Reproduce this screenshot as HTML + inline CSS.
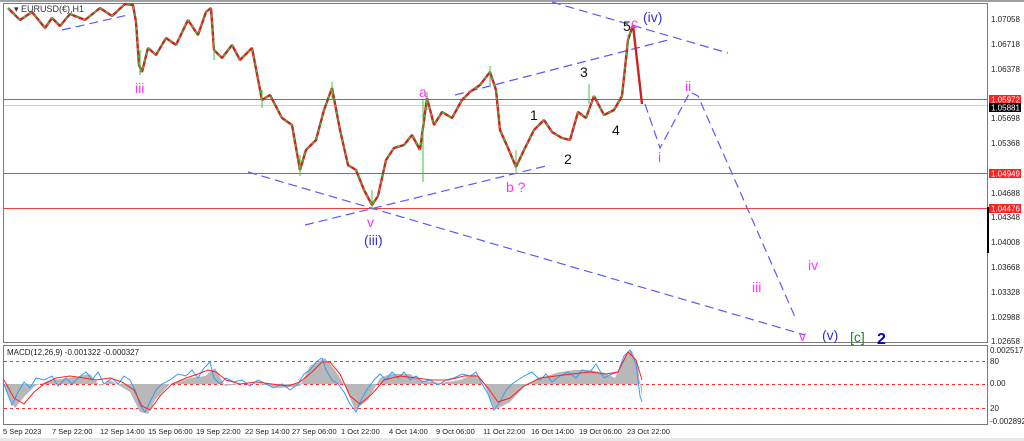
<!DOCTYPE html>
<html><head><meta charset="utf-8"><style>
html,body{margin:0;padding:0;background:#fff;width:1024px;height:441px;overflow:hidden}
svg{display:block;font-family:"Liberation Sans",sans-serif}
</style></head><body>
<svg width="1024" height="441" viewBox="0 0 1024 441" xmlns="http://www.w3.org/2000/svg">
<rect x="0" y="0" width="1024" height="441" fill="#fff"/>
<rect x="0" y="0" width="1024" height="2" fill="#a0a0a0"/>
<rect x="3.5" y="3.5" width="984" height="339" fill="#fff" stroke="#7a7a7a"/>
<rect x="3.5" y="345.5" width="984" height="79" fill="#fff" stroke="#7a7a7a"/>
<line x1="4" y1="99.5" x2="987" y2="99.5" stroke="#f04040"/>
<line x1="4" y1="105.5" x2="987" y2="105.5" stroke="#d0d0d0"/>
<line x1="4" y1="173.5" x2="987" y2="173.5" stroke="#f04040"/>
<line x1="4" y1="208.5" x2="987" y2="208.5" stroke="#f04040"/>
<g stroke="#5a5aff" stroke-width="1.2" stroke-dasharray="9,5" fill="none">
<line x1="62" y1="30" x2="128" y2="15"/>
<line x1="248" y1="172" x2="805" y2="335"/>
<line x1="305" y1="225" x2="550" y2="165"/>
<line x1="455" y1="95" x2="668" y2="40"/>
<line x1="552" y1="2" x2="728" y2="53"/>
<polyline points="645,104 660,148 690,92 698,96 795,317"/>
</g>
<g fill="none" stroke-linejoin="bevel">
<polyline stroke="#d02020" stroke-width="2.4" points="8,8 20,20 32,12 45,28 52,18 60,26 70,14 85,20 100,8 112,16 125,4 133,5 136,22 139,65 142,72 148,48 156,55 166,38 176,45 188,20 198,35 206,12 211,8 214,50 222,58 232,45 240,60 252,48 262,100 270,95 282,118 292,125 300,170 306,150 316,140 324,110 332,88 340,130 348,165 356,170 364,190 372,205 378,196 386,160 394,148 404,145 412,135 420,150 427,98 434,125 442,112 452,118 462,100 470,92 480,85 490,72 496,90 500,130 508,148 516,167 524,150 534,130 544,120 552,132 562,138 570,140 578,112 586,118 594,96 604,115 614,110 622,96 628,40 633,25 637,60 642,104"/>
<polyline stroke="#40c040" stroke-width="1.4" stroke-dasharray="3,4" points="8,8 20,20 32,12 45,28 52,18 60,26 70,14 85,20 100,8 112,16 125,4 133,5 136,22 139,65 142,72 148,48 156,55 166,38 176,45 188,20 198,35 206,12 211,8 214,50 222,58 232,45 240,60 252,48 262,100 270,95 282,118 292,125 300,170 306,150 316,140 324,110 332,88 340,130 348,165 356,170 364,190 372,205 378,196 386,160 394,148 404,145 412,135 420,150 427,98 434,125 442,112 452,118 462,100 470,92 480,85 490,72 496,90 500,130 508,148 516,167 524,150 534,130 544,120 552,132 562,138 570,140 578,112 586,118 594,96 604,115 614,110 622,96 628,40 633,25"/>
</g>
<g stroke="#40c040" stroke-width="1">
<line x1="140" y1="50" x2="140" y2="75"/><line x1="214" y1="40" x2="214" y2="60"/><line x1="262" y1="90" x2="262" y2="108"/>
<line x1="300" y1="155" x2="300" y2="176"/><line x1="332" y1="82" x2="332" y2="100"/><line x1="372" y1="190" x2="372" y2="210"/>
<line x1="423" y1="100" x2="423" y2="182"/><line x1="427" y1="92" x2="427" y2="110"/><line x1="490" y1="66" x2="490" y2="85"/>
<line x1="516" y1="150" x2="516" y2="172"/><line x1="589" y1="84" x2="589" y2="104"/><line x1="628" y1="35" x2="628" y2="50"/>
</g>
<text x="14" y="12" font-size="9" fill="#333">▾ EURUSD(€),H1</text>
<g font-size="14">
<text x="135" y="93" fill="#ff33ff">iii</text>
<text x="419" y="97" fill="#ff33ff">a</text>
<text x="506" y="192" fill="#ff33ff">b ?</text>
<text x="530" y="120" fill="#111">1</text>
<text x="564" y="164" fill="#111">2</text>
<text x="580" y="77" fill="#111">3</text>
<text x="612" y="135" fill="#111">4</text>
<text x="623" y="31" fill="#111">5</text>
<text x="631" y="28" fill="#ff33ff">c</text>
<text x="643" y="22" fill="#3333cc">(iv)</text>
<text x="685" y="91" fill="#ff33ff">ii</text>
<text x="658" y="162" fill="#ff33ff">i</text>
<text x="367" y="227" fill="#ff33ff">v</text>
<text x="364" y="245" fill="#3333cc">(iii)</text>
<text x="752" y="292" fill="#ff33ff">iii</text>
<text x="808" y="270" fill="#ff33ff">iv</text>
<text x="799" y="341" fill="#ff33ff">v</text>
<text x="822" y="340" fill="#3333cc">(v)</text>
<text x="850" y="342" fill="#228822">[c]</text>
<text x="877" y="344" fill="#0000cc" font-weight="bold" font-size="16">2</text>
</g>
<g font-size="8" fill="#222">
<text x="991" y="22">1.07058</text><text x="991" y="47">1.06718</text><text x="991" y="72">1.06378</text>
<text x="991" y="121">1.05698</text><text x="991" y="146">1.05368</text>
<text x="991" y="196">1.04688</text><text x="991" y="220">1.04348</text><text x="991" y="245">1.04008</text>
<text x="991" y="270">1.03668</text><text x="991" y="295">1.03328</text><text x="991" y="320">1.02988</text><text x="991" y="344">1.02658</text>
</g>
<rect x="989" y="95" width="32" height="9" fill="#ff2020"/><text x="991" y="102.5" font-size="8" fill="#fff">1.05972</text>
<rect x="989" y="103" width="32" height="9" fill="#000"/><text x="991" y="110.5" font-size="8" fill="#fff">1.05881</text>
<rect x="989" y="169" width="32" height="9" fill="#ff2020"/><text x="991" y="176.5" font-size="8" fill="#fff">1.04949</text>
<rect x="989" y="204" width="32" height="9" fill="#ff2020"/><text x="991" y="211.5" font-size="8" fill="#fff">1.04476</text>
<rect x="987" y="207" width="2" height="46" fill="#000"/>
<g stroke="#ff3030" stroke-dasharray="3,3"><line x1="4" y1="361.5" x2="987" y2="361.5"/><line x1="4" y1="384.5" x2="987" y2="384.5"/><line x1="4" y1="408.5" x2="987" y2="408.5"/></g>
<polygon fill="#b8b8b8" points="4,384 10,400 15,408 25,396 35,386 50,380 70,378 90,374 100,386 110,380 130,392 140,412 148,414 155,400 170,384 190,378 205,376 215,368 225,386 240,384 260,384 280,388 300,386 310,366 325,358 335,370 345,386 355,410 368,400 380,378 390,374 410,374 420,380 440,383 460,380 475,374 485,386 495,410 510,402 525,386 540,378 560,372 575,370 590,370 605,373 615,378 625,356 632,350 638,368 642,398 642,384 4,384"/>
<polyline fill="none" stroke="#3399ff" stroke-width="1" points="4,384 8,395 12,405 18,392 24,382 30,388 36,378 44,380 52,376 58,386 66,378 72,384 78,378 86,372 92,380 98,372 104,384 112,378 118,384 124,376 130,380 136,392 140,405 145,412 150,402 156,390 162,384 170,380 178,374 186,376 192,370 198,378 204,368 210,362 214,378 220,384 226,378 234,382 242,380 250,386 258,380 266,384 274,388 282,384 290,390 298,384 304,374 310,370 316,362 322,358 326,370 332,380 338,384 344,392 350,404 356,412 362,398 368,388 374,380 380,374 386,380 392,372 398,378 404,372 410,380 416,376 422,382 430,380 438,385 446,380 454,378 462,374 470,376 476,372 482,384 488,394 494,410 500,402 506,390 512,384 518,380 524,376 532,372 540,380 546,374 552,382 560,376 568,372 576,378 582,370 590,372 596,364 604,378 612,374 618,372 624,356 630,350 636,364 640,396 642,402"/>
<polyline fill="none" stroke="#ff2020" stroke-width="1" points="4,380 14,398 24,404 34,392 44,384 56,378 70,376 84,378 96,380 110,378 122,382 134,390 142,406 150,410 160,396 172,384 186,378 198,374 208,370 216,372 226,380 240,384 256,382 272,384 288,386 300,382 312,372 322,362 330,362 340,374 350,396 360,404 372,394 384,380 400,376 416,378 432,380 448,380 464,376 478,376 488,388 498,402 510,398 524,386 540,378 556,376 572,374 590,372 606,374 618,372 628,352 636,360 642,380"/>
<text x="7" y="355" font-size="8" fill="#222">MACD(12,26,9) -0.001322 -0.000327</text>
<g font-size="8" fill="#222">
<text x="990" y="353">0.002517</text><text x="990" y="364">80</text><text x="990" y="386">0.00</text><text x="990" y="411">20</text><text x="990" y="424">-0.002892</text>
</g>
<g font-size="7.5" fill="#222">
<text x="3" y="434">5 Sep 2023</text><text x="52" y="434">7 Sep 22:00</text><text x="100" y="434">12 Sep 14:00</text>
<text x="148" y="434">15 Sep 06:00</text><text x="196" y="434">19 Sep 22:00</text><text x="245" y="434">22 Sep 14:00</text>
<text x="292" y="434">27 Sep 06:00</text><text x="341" y="434">1 Oct 22:00</text><text x="389" y="434">4 Oct 14:00</text>
<text x="436" y="434">9 Oct 06:00</text><text x="483" y="434">11 Oct 22:00</text><text x="531" y="434">16 Oct 14:00</text>
<text x="579" y="434">19 Oct 06:00</text><text x="627" y="434">23 Oct 22:00</text>
</g>
<rect x="0" y="438" width="1024" height="3" fill="#e8e8e8"/>
</svg>
</body></html>
